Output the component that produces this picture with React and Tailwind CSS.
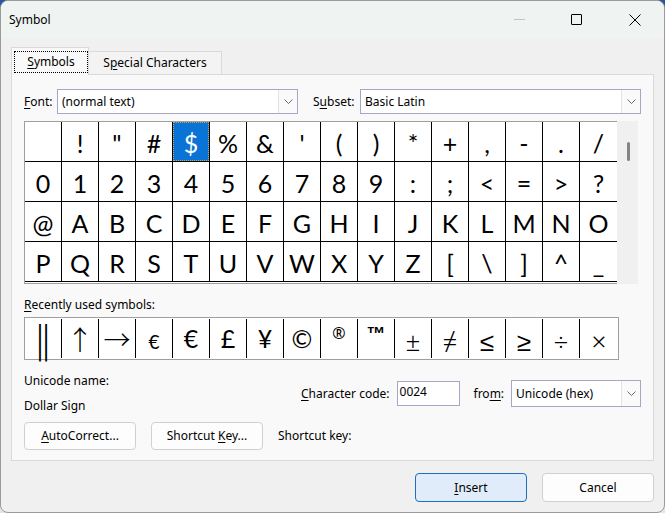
import React from 'react';

const rows = [
  [' ', '!', '"', '#', '$', '%', '&', "'", '(', ')', '*', '+', ',', '-', '.', '/'],
  '0123456789:;<=>?'.split(''),
  '@ABCDEFGHIJKLMNO'.split(''),
  'PQRSTUVWXYZ[\\]^_'.split(''),
];

const recent = ['‖', '↑', '→', '€s', '€', '£', '¥', '©', '®', '™', '±', '≠', '≤', '≥', '÷', '×'];

function U({ children }) {
  return <span className="underline underline-offset-[2px] decoration-1">{children}</span>;
}

function Chevron() {
  return (
    <svg width="9" height="5" viewBox="0 0 9 5">
      <path d="M0.5 0.5 L4.5 4.5 L8.5 0.5" fill="none" stroke="#6b6b6b" strokeWidth="1" />
    </svg>
  );
}

function Select({ value, w }) {
  return (
    <div className={`flex h-[25px] items-stretch border border-[#a6a6c8] bg-white ${w}`}>
      <div className="flex flex-1 items-center whitespace-nowrap pl-[4px] text-black">{value}</div>
      <div className="flex w-[19px] items-center justify-center border-l border-[#e3e3e3] bg-[#fafafa]">
        <Chevron />
      </div>
    </div>
  );
}

function Btn({ children, w }) {
  return (
    <div className={`flex h-[28px] items-center justify-center rounded-[4px] border border-[#d0d0d0] bg-[#fdfdfd] ${w}`}>
      {children}
    </div>
  );
}

function RecentCell({ s }) {
  if (s === '‖') {
    return <span className="font-['DejaVu_Sans',sans-serif] text-[38px] font-light leading-none">‖</span>;
  }
  if (s === '↑' || s === '→') {
    return (
      <span className="font-['Noto_Sans_CJK_JP',sans-serif] text-[27px] font-light leading-none">{s}</span>
    );
  }
  if (s === '€s') {
    return <span className="mt-[6px] font-['Lato',sans-serif] text-[19px] leading-none">€</span>;
  }
  if (s === '®') {
    return <span className="mb-[12px] font-['Noto_Sans',sans-serif] text-[16px] leading-none">®</span>;
  }
  if (s === '™') {
    return <span className="mb-[10px] font-['Liberation_Sans',sans-serif] text-[19px] font-bold leading-none">™</span>;
  }
  if (['±', '≠', '≤', '≥', '÷', '×'].includes(s)) {
    return <span className="mt-[4px] font-['Noto_Sans',sans-serif] text-[26px] font-light leading-none">{s}</span>;
  }
  return <span className="font-['Lato',sans-serif] text-[25px] leading-none">{s}</span>;
}

export default function App() {
  return (
    <div className="h-[513px] w-[665px] bg-[linear-gradient(to_bottom,#2b579a_50%,#e4e4e4_50%)] font-['Noto_Sans','Open_Sans',sans-serif] text-[12px] text-black">
      <div className="flex h-full w-full flex-col overflow-hidden rounded-[8px] border border-[#9a9a9a] bg-[#f0f0f0]">
        {/* title bar */}
        <div className="flex h-[37px] shrink-0 items-center bg-[#eff3f1] pl-[8px]">
          <span className="text-[12px]">Symbol</span>
          <div className="ml-auto mr-[23px] flex items-center">
            <div className="h-[1px] w-[11px] bg-[#c4c4c4]" />
            <div className="ml-[46px] h-[11px] w-[11px] rounded-[1px] border border-black" />
            <svg className="ml-[47px]" width="12" height="12" viewBox="0 0 12 12">
              <path d="M0.5 0.5 L11.5 11.5 M11.5 0.5 L0.5 11.5" stroke="#000" strokeWidth="1" />
            </svg>
          </div>
        </div>

        {/* body */}
        <div className="flex flex-1 flex-col px-[10px] pt-[9px]">
          {/* tabs */}
          <div className="flex h-[27px] items-end">
            <div className="relative z-10 -mb-[1px] flex h-[28px] w-[78px] border-l border-r border-t border-[#dadada] bg-[#f9f9f9] pb-[2px] pl-[2px] pt-[3px]">
              <div className="flex flex-1 items-center justify-center border border-dotted border-black">
                <span>
                  <U>S</U>ymbols
                </span>
              </div>
            </div>
            <div className="flex h-[23px] w-[133px] items-center justify-center border-r border-t border-[#dadada] bg-[#f3f3f3]">
              <span>
                S<U>p</U>ecial Characters
              </span>
            </div>
          </div>

          {/* panel */}
          <div className="flex flex-col border border-[#dadada] bg-[#f9f9f9] pb-[10px] pl-[12px] pr-[12px] pt-[14px]">
            <div className="flex items-center">
              <span className="w-[33px]">
                <U>F</U>ont:
              </span>
              <Select value="(normal text)" w="w-[241px]" />
              <span className="ml-[15px] w-[47px]">
                S<U>u</U>bset:
              </span>
              <Select value="Basic Latin" w="w-[281px]" />
            </div>

            {/* grid */}
            <div className="mt-[7px] flex">
              <div className="w-[593px] border-b border-l border-t border-[#9f9f9f] bg-white pb-[1px]">
                {rows.map((row, ri) => (
                  <div key={ri} className="flex h-[40px] border-b border-black">
                    {row.map((c, ci) => {
                      const sel = ri === 0 && ci === 4;
                      return (
                        <div
                          key={ci}
                          className={`flex w-[37px] items-stretch ${ci < 15 ? 'border-r border-black' : ''} ${
                            sel ? 'bg-[#0a74d6] text-white' : ''
                          }`}
                        >
                          <div
                            className={`flex flex-1 items-center justify-center pt-[3px] font-['Lato',sans-serif] text-[25px] leading-none ${
                              sel ? 'border border-dotted border-[#e0a040]' : ''
                            }`}
                          >
                            {c}
                          </div>
                        </div>
                      );
                    })}
                  </div>
                ))}
              </div>
              <div className="w-[21px] bg-[#f0f0f0] pl-[10px] pt-[21px]">
                <div className="h-[19px] w-[3px] rounded-full bg-[#858585]" />
              </div>
            </div>

            {/* recently used */}
            <div className="mt-[13px] h-[16px] leading-[16px]">
              <U>R</U>ecently used symbols:
            </div>
            <div className="mt-[4px] flex h-[43px] w-[595px] border border-[#9f9f9f] bg-white py-[1px]">
              {recent.map((s, i) => (
                <div
                  key={i}
                  className={`flex items-center justify-center ${i < 15 ? 'w-[37px] border-r border-black' : 'flex-1'}`}
                >
                  <RecentCell s={s} />
                </div>
              ))}
            </div>

            {/* unicode info */}
            <div className="mt-[13px] flex h-[41px]">
              <div className="flex w-[277px] shrink-0 flex-col justify-between leading-[16px]">
                <span>Unicode name:</span>
                <span>Dollar Sign</span>
              </div>
              <div className="flex items-center whitespace-nowrap">
                <span className="shrink-0">
                  <U>C</U>haracter code:
                </span>
                <div className="ml-[7px] flex h-[25px] w-[63px] shrink-0 items-start border border-[#a6a6c8] bg-white pl-[2px] pt-[1px] leading-[18px]">
                  0024
                </div>
                <span className="ml-[14px] shrink-0">
                  fro<U>m</U>:
                </span>
                <div className="ml-[7px] shrink-0">
                  <Select value="Unicode (hex)" w="w-[130px] h-[27px]" />
                </div>
              </div>
            </div>

            {/* buttons */}
            <div className="mt-[8px] flex items-center">
              <Btn w="w-[112px]">
                <span>
                  <U>A</U>utoCorrect...
                </span>
              </Btn>
              <div className="ml-[15px]">
                <Btn w="w-[112px]">
                  <span>
                    Shortcut <U>K</U>ey...
                  </span>
                </Btn>
              </div>
              <span className="ml-[15px]">Shortcut key:</span>
            </div>
          </div>

          {/* bottom buttons */}
          <div className="mt-[12px] flex justify-end">
            <div className="flex h-[29px] w-[112px] items-center justify-center rounded-[4px] border border-[#1a6fc4] bg-[#e0ecf9]">
              <span>
                <U>I</U>nsert
              </span>
            </div>
            <div className="ml-[15px] flex h-[29px] w-[112px] items-center justify-center rounded-[4px] border border-[#d0d0d0] bg-[#fdfdfd]">
              Cancel
            </div>
          </div>
        </div>
      </div>
    </div>
  );
}
